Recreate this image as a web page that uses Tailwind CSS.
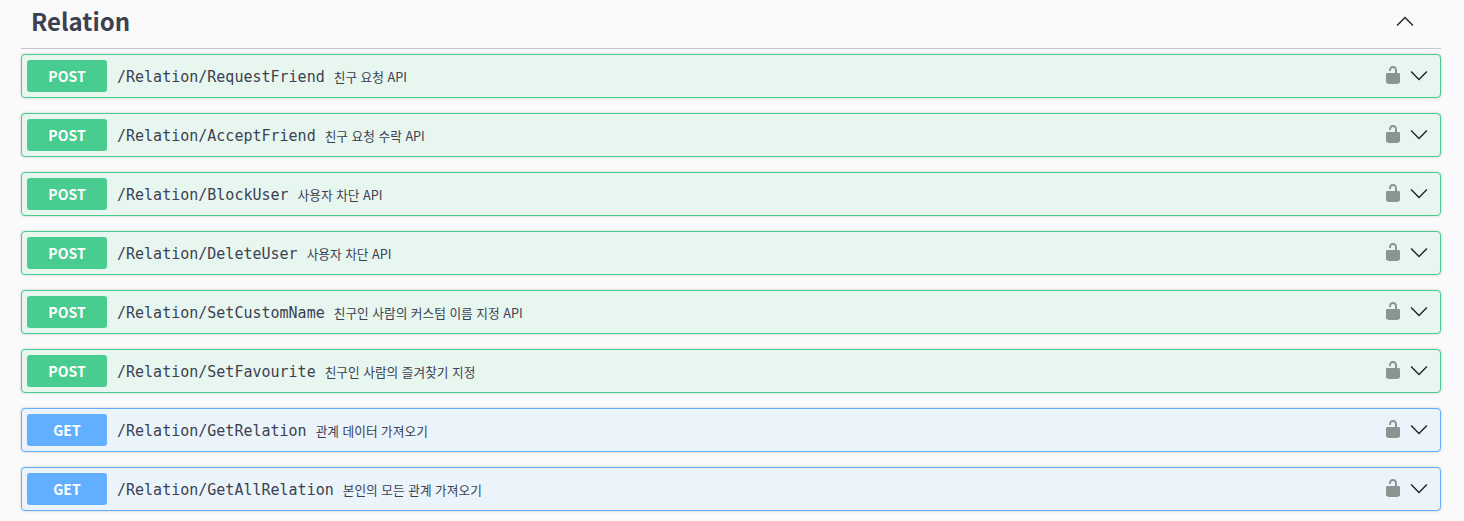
<!DOCTYPE html>
<html lang="ko">
<head>
    <meta charset="UTF-8">
    <title>Relation</title>
    <script src="https://cdn.jsdelivr.net/npm/@tailwindcss/browser@4"></script>
</head>
<body class="bg-[#fafafa] h-[521px] overflow-hidden font-['Noto_Sans_CJK_KR',sans-serif]">
    <div class="px-[21px] w-[1462px]">
        <div class="h-[49px] pl-[10px] pr-[26px] pb-[7px] flex items-center justify-between border-b border-[#c6c7cc]">
            <h3 class="text-[24px] leading-[44px] font-bold text-[#3b4151]">Relation</h3>
            <svg class="w-[20px] h-[20px]" viewBox="0 0 20 20" fill="#222"><path d="M17.418 14.908L10 7.49l-7.418 7.418-.98-.98L10 5.53l8.398 8.398z"/></svg>
        </div>
        <div class="mt-[5px] flex flex-col gap-[15px]">
            <div class="h-[44px] flex items-center pl-[5px] pr-[11px] rounded-[4px] border border-[#49cc90] bg-[#e8f6f0] shadow-[0_0_3px_rgba(0,0,0,0.19)]">
                <span class="w-[80px] h-[32px] flex items-center justify-center rounded-[3px] bg-[#49cc90] text-white text-[14px] font-bold">POST</span>
                <span class="ml-[10px] mt-[2px] font-['DejaVu_Sans_Mono',monospace] text-[15px] text-[#3b4151]">/Relation/RequestFriend</span>
                <span class="ml-[9px] mt-[2px] text-[12.7px] text-[#3b4151]">친구 요청 API</span>
                <svg class="ml-auto mb-[2px] w-[20px] h-[20px]" viewBox="0 0 20 20" fill="#8a9490"><path d="M15.8 8H14V5.6C14 2.703 12.665 1 10 1 7.334 1 6 2.703 6 5.6V6h2v-.801C8 3.754 8.797 3 10 3c1.203 0 2 .754 2 2.199V8H4c-.553 0-1 .646-1 1.199V17c0 .549.428 1.139.951 1.307l1.197.387C5.672 18.861 6.55 19 7.1 19h5.8c.549 0 1.428-.139 1.951-.307l1.196-.387c.524-.167.953-.757.953-1.306V9.199C17 8.646 16.352 8 15.8 8z"/></svg>
                <svg class="ml-[6px] mb-[2px] w-[20px] h-[20px]" viewBox="0 0 20 20" fill="#222"><path d="M17.418 6.109L10 13.527 2.582 6.109l-.98.98L10 15.488l8.398-8.399z"/></svg>
            </div>
            <div class="h-[44px] flex items-center pl-[5px] pr-[11px] rounded-[4px] border border-[#49cc90] bg-[#e8f6f0] shadow-[0_0_3px_rgba(0,0,0,0.19)]">
                <span class="w-[80px] h-[32px] flex items-center justify-center rounded-[3px] bg-[#49cc90] text-white text-[14px] font-bold">POST</span>
                <span class="ml-[10px] mt-[2px] font-['DejaVu_Sans_Mono',monospace] text-[15px] text-[#3b4151]">/Relation/AcceptFriend</span>
                <span class="ml-[9px] mt-[2px] text-[12.7px] text-[#3b4151]">친구 요청 수락 API</span>
                <svg class="ml-auto mb-[2px] w-[20px] h-[20px]" viewBox="0 0 20 20" fill="#8a9490"><path d="M15.8 8H14V5.6C14 2.703 12.665 1 10 1 7.334 1 6 2.703 6 5.6V6h2v-.801C8 3.754 8.797 3 10 3c1.203 0 2 .754 2 2.199V8H4c-.553 0-1 .646-1 1.199V17c0 .549.428 1.139.951 1.307l1.197.387C5.672 18.861 6.55 19 7.1 19h5.8c.549 0 1.428-.139 1.951-.307l1.196-.387c.524-.167.953-.757.953-1.306V9.199C17 8.646 16.352 8 15.8 8z"/></svg>
                <svg class="ml-[6px] mb-[2px] w-[20px] h-[20px]" viewBox="0 0 20 20" fill="#222"><path d="M17.418 6.109L10 13.527 2.582 6.109l-.98.98L10 15.488l8.398-8.399z"/></svg>
            </div>
            <div class="h-[44px] flex items-center pl-[5px] pr-[11px] rounded-[4px] border border-[#49cc90] bg-[#e8f6f0] shadow-[0_0_3px_rgba(0,0,0,0.19)]">
                <span class="w-[80px] h-[32px] flex items-center justify-center rounded-[3px] bg-[#49cc90] text-white text-[14px] font-bold">POST</span>
                <span class="ml-[10px] mt-[2px] font-['DejaVu_Sans_Mono',monospace] text-[15px] text-[#3b4151]">/Relation/BlockUser</span>
                <span class="ml-[9px] mt-[2px] text-[12.7px] text-[#3b4151]">사용자 차단 API</span>
                <svg class="ml-auto mb-[2px] w-[20px] h-[20px]" viewBox="0 0 20 20" fill="#8a9490"><path d="M15.8 8H14V5.6C14 2.703 12.665 1 10 1 7.334 1 6 2.703 6 5.6V6h2v-.801C8 3.754 8.797 3 10 3c1.203 0 2 .754 2 2.199V8H4c-.553 0-1 .646-1 1.199V17c0 .549.428 1.139.951 1.307l1.197.387C5.672 18.861 6.55 19 7.1 19h5.8c.549 0 1.428-.139 1.951-.307l1.196-.387c.524-.167.953-.757.953-1.306V9.199C17 8.646 16.352 8 15.8 8z"/></svg>
                <svg class="ml-[6px] mb-[2px] w-[20px] h-[20px]" viewBox="0 0 20 20" fill="#222"><path d="M17.418 6.109L10 13.527 2.582 6.109l-.98.98L10 15.488l8.398-8.399z"/></svg>
            </div>
            <div class="h-[44px] flex items-center pl-[5px] pr-[11px] rounded-[4px] border border-[#49cc90] bg-[#e8f6f0] shadow-[0_0_3px_rgba(0,0,0,0.19)]">
                <span class="w-[80px] h-[32px] flex items-center justify-center rounded-[3px] bg-[#49cc90] text-white text-[14px] font-bold">POST</span>
                <span class="ml-[10px] mt-[2px] font-['DejaVu_Sans_Mono',monospace] text-[15px] text-[#3b4151]">/Relation/DeleteUser</span>
                <span class="ml-[9px] mt-[2px] text-[12.7px] text-[#3b4151]">사용자 차단 API</span>
                <svg class="ml-auto mb-[2px] w-[20px] h-[20px]" viewBox="0 0 20 20" fill="#8a9490"><path d="M15.8 8H14V5.6C14 2.703 12.665 1 10 1 7.334 1 6 2.703 6 5.6V6h2v-.801C8 3.754 8.797 3 10 3c1.203 0 2 .754 2 2.199V8H4c-.553 0-1 .646-1 1.199V17c0 .549.428 1.139.951 1.307l1.197.387C5.672 18.861 6.55 19 7.1 19h5.8c.549 0 1.428-.139 1.951-.307l1.196-.387c.524-.167.953-.757.953-1.306V9.199C17 8.646 16.352 8 15.8 8z"/></svg>
                <svg class="ml-[6px] mb-[2px] w-[20px] h-[20px]" viewBox="0 0 20 20" fill="#222"><path d="M17.418 6.109L10 13.527 2.582 6.109l-.98.98L10 15.488l8.398-8.399z"/></svg>
            </div>
            <div class="h-[44px] flex items-center pl-[5px] pr-[11px] rounded-[4px] border border-[#49cc90] bg-[#e8f6f0] shadow-[0_0_3px_rgba(0,0,0,0.19)]">
                <span class="w-[80px] h-[32px] flex items-center justify-center rounded-[3px] bg-[#49cc90] text-white text-[14px] font-bold">POST</span>
                <span class="ml-[10px] mt-[2px] font-['DejaVu_Sans_Mono',monospace] text-[15px] text-[#3b4151]">/Relation/SetCustomName</span>
                <span class="ml-[9px] mt-[2px] text-[12.7px] text-[#3b4151]">친구인 사람의 커스텀 이름 지정 API</span>
                <svg class="ml-auto mb-[2px] w-[20px] h-[20px]" viewBox="0 0 20 20" fill="#8a9490"><path d="M15.8 8H14V5.6C14 2.703 12.665 1 10 1 7.334 1 6 2.703 6 5.6V6h2v-.801C8 3.754 8.797 3 10 3c1.203 0 2 .754 2 2.199V8H4c-.553 0-1 .646-1 1.199V17c0 .549.428 1.139.951 1.307l1.197.387C5.672 18.861 6.55 19 7.1 19h5.8c.549 0 1.428-.139 1.951-.307l1.196-.387c.524-.167.953-.757.953-1.306V9.199C17 8.646 16.352 8 15.8 8z"/></svg>
                <svg class="ml-[6px] mb-[2px] w-[20px] h-[20px]" viewBox="0 0 20 20" fill="#222"><path d="M17.418 6.109L10 13.527 2.582 6.109l-.98.98L10 15.488l8.398-8.399z"/></svg>
            </div>
            <div class="h-[44px] flex items-center pl-[5px] pr-[11px] rounded-[4px] border border-[#49cc90] bg-[#e8f6f0] shadow-[0_0_3px_rgba(0,0,0,0.19)]">
                <span class="w-[80px] h-[32px] flex items-center justify-center rounded-[3px] bg-[#49cc90] text-white text-[14px] font-bold">POST</span>
                <span class="ml-[10px] mt-[2px] font-['DejaVu_Sans_Mono',monospace] text-[15px] text-[#3b4151]">/Relation/SetFavourite</span>
                <span class="ml-[9px] mt-[2px] text-[12.7px] text-[#3b4151]">친구인 사람의 즐겨찾기 지정</span>
                <svg class="ml-auto mb-[2px] w-[20px] h-[20px]" viewBox="0 0 20 20" fill="#8a9490"><path d="M15.8 8H14V5.6C14 2.703 12.665 1 10 1 7.334 1 6 2.703 6 5.6V6h2v-.801C8 3.754 8.797 3 10 3c1.203 0 2 .754 2 2.199V8H4c-.553 0-1 .646-1 1.199V17c0 .549.428 1.139.951 1.307l1.197.387C5.672 18.861 6.55 19 7.1 19h5.8c.549 0 1.428-.139 1.951-.307l1.196-.387c.524-.167.953-.757.953-1.306V9.199C17 8.646 16.352 8 15.8 8z"/></svg>
                <svg class="ml-[6px] mb-[2px] w-[20px] h-[20px]" viewBox="0 0 20 20" fill="#222"><path d="M17.418 6.109L10 13.527 2.582 6.109l-.98.98L10 15.488l8.398-8.399z"/></svg>
            </div>
            <div class="h-[44px] flex items-center pl-[5px] pr-[11px] rounded-[4px] border border-[#61affe] bg-[#ebf3fb] shadow-[0_0_3px_rgba(0,0,0,0.19)]">
                <span class="w-[80px] h-[32px] flex items-center justify-center rounded-[3px] bg-[#61affe] text-white text-[14px] font-bold">GET</span>
                <span class="ml-[10px] mt-[2px] font-['DejaVu_Sans_Mono',monospace] text-[15px] text-[#3b4151]">/Relation/GetRelation</span>
                <span class="ml-[9px] mt-[2px] text-[12.7px] text-[#3b4151]">관계 데이터 가져오기</span>
                <svg class="ml-auto mb-[2px] w-[20px] h-[20px]" viewBox="0 0 20 20" fill="#8a9490"><path d="M15.8 8H14V5.6C14 2.703 12.665 1 10 1 7.334 1 6 2.703 6 5.6V6h2v-.801C8 3.754 8.797 3 10 3c1.203 0 2 .754 2 2.199V8H4c-.553 0-1 .646-1 1.199V17c0 .549.428 1.139.951 1.307l1.197.387C5.672 18.861 6.55 19 7.1 19h5.8c.549 0 1.428-.139 1.951-.307l1.196-.387c.524-.167.953-.757.953-1.306V9.199C17 8.646 16.352 8 15.8 8z"/></svg>
                <svg class="ml-[6px] mb-[2px] w-[20px] h-[20px]" viewBox="0 0 20 20" fill="#222"><path d="M17.418 6.109L10 13.527 2.582 6.109l-.98.98L10 15.488l8.398-8.399z"/></svg>
            </div>
            <div class="h-[44px] flex items-center pl-[5px] pr-[11px] rounded-[4px] border border-[#61affe] bg-[#ebf3fb] shadow-[0_0_3px_rgba(0,0,0,0.19)]">
                <span class="w-[80px] h-[32px] flex items-center justify-center rounded-[3px] bg-[#61affe] text-white text-[14px] font-bold">GET</span>
                <span class="ml-[10px] mt-[2px] font-['DejaVu_Sans_Mono',monospace] text-[15px] text-[#3b4151]">/Relation/GetAllRelation</span>
                <span class="ml-[9px] mt-[2px] text-[12.7px] text-[#3b4151]">본인의 모든 관계 가져오기</span>
                <svg class="ml-auto mb-[2px] w-[20px] h-[20px]" viewBox="0 0 20 20" fill="#8a9490"><path d="M15.8 8H14V5.6C14 2.703 12.665 1 10 1 7.334 1 6 2.703 6 5.6V6h2v-.801C8 3.754 8.797 3 10 3c1.203 0 2 .754 2 2.199V8H4c-.553 0-1 .646-1 1.199V17c0 .549.428 1.139.951 1.307l1.197.387C5.672 18.861 6.55 19 7.1 19h5.8c.549 0 1.428-.139 1.951-.307l1.196-.387c.524-.167.953-.757.953-1.306V9.199C17 8.646 16.352 8 15.8 8z"/></svg>
                <svg class="ml-[6px] mb-[2px] w-[20px] h-[20px]" viewBox="0 0 20 20" fill="#222"><path d="M17.418 6.109L10 13.527 2.582 6.109l-.98.98L10 15.488l8.398-8.399z"/></svg>
            </div>
        </div>
    </div>
</body>
</html>
